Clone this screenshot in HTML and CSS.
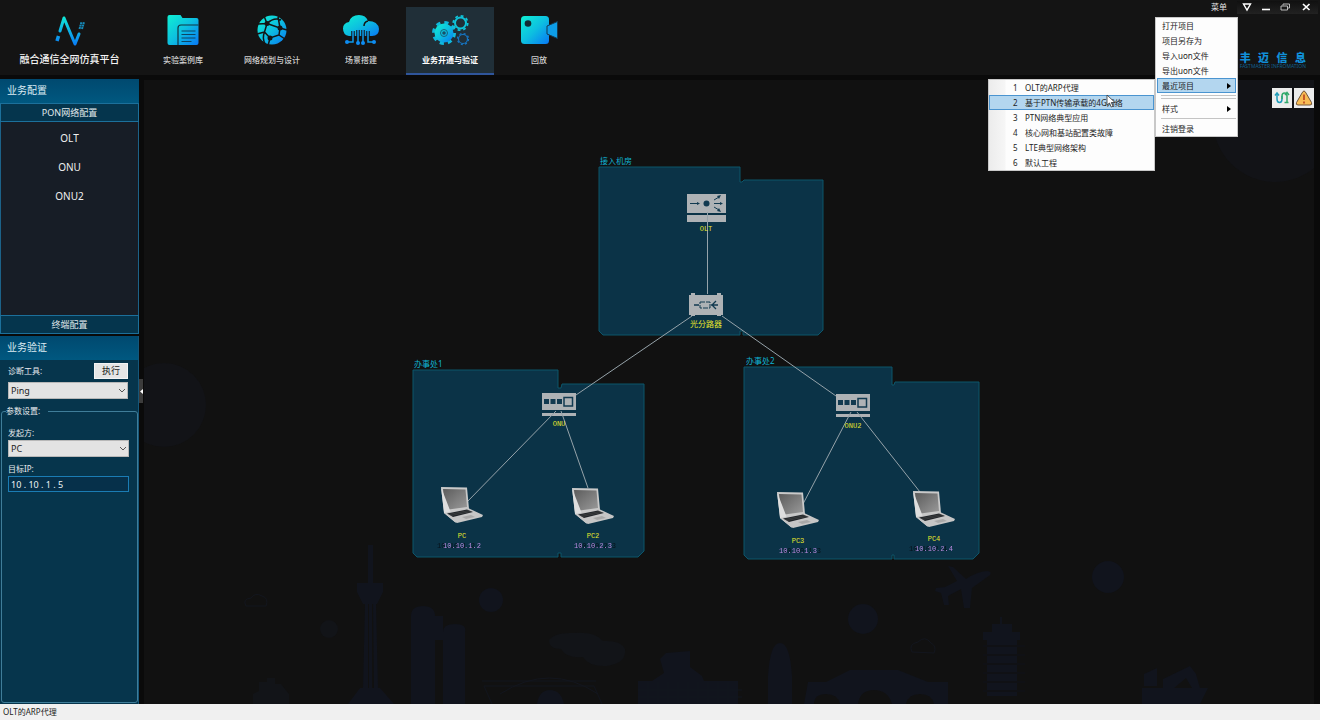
FILE: index.html
```
<!DOCTYPE html>
<html lang="zh-CN">
<head>
<meta charset="utf-8">
<title>融合通信全网仿真平台</title>
<link rel="stylesheet" href="styles.css">
</head>
<body>
<svg class="defs" width="0" height="0" aria-hidden="true">
  <defs>
    <linearGradient id="aqua" x1="0" y1="0" x2="1" y2="1">
      <stop offset="0" stop-color="#0ff0d2"/><stop offset="0.5" stop-color="#0dbfe0"/><stop offset="1" stop-color="#0878f5"/>
    </linearGradient>
    <linearGradient id="aquaDown" gradientUnits="userSpaceOnUse" x1="0" y1="0" x2="0" y2="32">
      <stop offset="0" stop-color="#10f0d4"/><stop offset="1" stop-color="#0a74f8"/>
    </linearGradient>
    <linearGradient id="screen" x1="0" y1="0" x2="1" y2="1">
      <stop offset="0" stop-color="#5c5c5c"/><stop offset="1" stop-color="#9b9b9b"/>
    </linearGradient>
    <symbol id="laptop" viewBox="0 0 44 38" overflow="visible">
      <path d="M1 1L27 1.500L29 23L16 27L4 26z" fill="#c9c9c9"/>
      <path d="M3 3L25.500 3.500L27 21L5 24z" fill="url(#screen)"/>
      <path d="M1 1L4 27L16 37L13 32z" fill="#dedede"/>
      <path d="M4 27L28 22L43 29L42 31L17 37L15 36z" fill="#c6c6c6"/>
      <path d="M7 27.500L27 23.500L33 26L13 31z" fill="#202428"/>
      <path d="M9 28.500L29 24.500M11 29.500L31 25.500" stroke="#555" stroke-width=".5"/>
      <path d="M22 31L31 29L35 31L26 33z" fill="#a8a8a8"/>
    </symbol>
    <symbol id="onu" viewBox="0 0 34 25" overflow="visible">
      <path d="M0 0H34V17H0zM0 20H34V23H0z" fill="#aeb2b5"/>
      <path d="M2 6h5v5h-5zM8.500 6h5v5h-5zM15 6h5v5h-5z" fill="#123a50"/>
      <rect x="22" y="4.500" width="8.500" height="8.500" fill="none" stroke="#123a50" stroke-width="1.500"/>
    </symbol>
  </defs>
</svg>

<div class="app">
  <header class="header">
    <div class="brand">
      <svg class="brand-mark" width="32" height="32" viewBox="0 0 32 32" aria-hidden="true">
        <g fill="none" stroke="url(#aquaDown)" stroke-width="3" stroke-linecap="round" stroke-linejoin="round">
          <path d="M6 16L10 3L21 29L25 19"/>
          <path d="M4.500 21L3 26" stroke-linecap="butt" stroke-width="3.500"/>
        </g>
        <path d="M25.500 14l2-7M28 14l2-7" stroke="#1689b8" stroke-width="2" stroke-dasharray="2 .5"/>
      </svg>
      <h1 class="brand-name">融合通信全网仿真平台</h1>
    </div>
    <nav class="nav" aria-label="主导航">
      <button class="nav-item" type="button">
        <svg width="36" height="36" viewBox="0 0 36 36" aria-hidden="true">
          <path d="M2.500 5q0-2 2-2h11l2 3h14q2 0 2 2v23q0 2-2 2h-27q-2 0-2-2z" fill="url(#aqua)"/>
          <path d="M13 33V16q0-3 3-3h17.500" fill="none" stroke="#123440" stroke-width="1.200"/>
          <path d="M16.500 19h14M16.500 22.500h14M16.500 26h14M16.500 29.500h10" stroke="#0c4564" stroke-width="1.200"/>
        </svg>
        <span>实验案例库</span>
      </button>
      <button class="nav-item" type="button">
        <svg width="36" height="36" viewBox="0 0 36 36" aria-hidden="true">
          <circle cx="18" cy="18" r="14.500" fill="url(#aqua)"/>
          <g stroke="#141414" stroke-width="1.500" fill="none">
            <path d="M13 11.500L26 16L25 23L16 26L10.500 20zM13 11.500L10 4M13 11.500L4 12M26 16L24 4.500M26 16L33 18M25 23L31 27M16 26L14 34M10.500 20L3 22M13 11.500Q20 5 27 8M10.500 20Q8 26 11 32"/>
          </g>
          <g fill="#141414"><circle cx="13" cy="11.500" r="2.500"/><circle cx="26" cy="16" r="2.500"/><circle cx="16" cy="26" r="2.500"/></g>
        </svg>
        <span>网络规划与设计</span>
      </button>
      <button class="nav-item" type="button">
        <svg width="40" height="36" viewBox="0 0 40 36" aria-hidden="true">
          <path d="M8 24Q2 23 2 16.500Q2 11 8 10Q10 3 18 3Q25 3 27 9Q37 9 38 17Q38 24 31 24z" fill="url(#aqua)"/>
          <path d="M27 9Q23 10 23 14" fill="none" stroke="#141414" stroke-width="1.500"/>
          <g fill="none" stroke="#141414" stroke-width="3.500"><path d="M12 19V29M17 18V29M22 18V29M27 19V29"/></g>
          <g fill="none" stroke="#0d9bea" stroke-width="1.500"><path d="M12 19V30H7M17 18V31M22 18V31M27 19v11h6"/></g>
          <g fill="#0d8cf2"><circle cx="6" cy="30" r="2"/><circle cx="17" cy="31" r="2"/><circle cx="22" cy="31" r="2"/><circle cx="33" cy="30" r="2"/></g>
        </svg>
        <span>场景搭建</span>
      </button>
      <button class="nav-item nav-item--active" type="button" aria-current="page">
        <svg width="40" height="36" viewBox="0 0 40 36" aria-hidden="true">
          <circle cx="14" cy="21" r="10.500" fill="none" stroke="#10b9dc" stroke-width="3" stroke-dasharray="4.200 4.050"/>
          <circle cx="14" cy="21" r="9.500" fill="url(#aqua)"/>
          <circle cx="14" cy="21" r="3.500" fill="none" stroke="#17627c" stroke-width="1"/>
          <circle cx="14" cy="21" r="1.800" fill="#17516a"/>
          <circle cx="30.500" cy="11" r="5.500" fill="none" stroke="#0fc2d8" stroke-width="2"/>
          <circle cx="30.500" cy="11" r="7.200" fill="none" stroke="#0fc2d8" stroke-width="1.800" stroke-dasharray="2.850 2.800"/>
          <circle cx="33" cy="27" r="4.500" fill="none" stroke="#1677c5" stroke-width="1.200"/>
          <circle cx="33" cy="27" r="5.500" fill="none" stroke="#1677c5" stroke-width="1.300" stroke-dasharray="2 2.320"/>
        </svg>
        <span>业务开通与验证</span>
      </button>
      <button class="nav-item" type="button">
        <svg width="40" height="36" viewBox="0 0 40 36" aria-hidden="true">
          <rect x="2" y="4" width="28" height="28" rx="3.500" fill="url(#aqua)"/>
          <circle cx="9" cy="11.500" r="3.300" fill="#122a32"/>
          <path d="M28 14L38.500 9.500V26.500L28 22z" fill="#0d9ee8" stroke="#143a50" stroke-width="1"/>
        </svg>
        <span>回放</span>
      </button>
    </nav>
    <div class="header-end">
      <div class="window-bar">
        <button class="menu-trigger" type="button" aria-expanded="true">菜单</button>
        <button class="win-btn" type="button" aria-label="展开"><svg width="10" height="10" viewBox="0 0 10 10"><path d="M1.500 2h7L5 8z" fill="none" stroke="#fff" stroke-width="1.400"/></svg></button>
        <button class="win-btn" type="button" aria-label="最小化"><svg width="10" height="10" viewBox="0 0 10 10"><path d="M1 7.500h8" stroke="#fff" stroke-width="1.600"/></svg></button>
        <button class="win-btn" type="button" aria-label="还原"><svg width="10" height="10" viewBox="0 0 10 10"><path d="M3 3.500V2h6.500v4H7.500M1 4h6.500v4H1z" fill="none" stroke="#bbb"/></svg></button>
        <button class="win-btn win-btn--close" type="button" aria-label="关闭"><svg width="10" height="10" viewBox="0 0 10 10"><path d="M2 2l6.500 6M8.500 2L2 8" stroke="#fff" stroke-width="1.700"/></svg></button>
      </div>
      <div class="vendor">
        <p class="vendor-name"><span>丰</span><span>迈</span><span>信</span><span>息</span></p>
        <p class="vendor-sub">FASTMASTER INFROMATION</p>
      </div>
      <div class="menu" role="menu">
        <button class="menu-item" role="menuitem" type="button">打开项目</button>
        <button class="menu-item" role="menuitem" type="button">项目另存为</button>
        <button class="menu-item" role="menuitem" type="button">导入uon文件</button>
        <button class="menu-item" role="menuitem" type="button">导出uon文件</button>
        <div class="menu-group">
          <button class="menu-item menu-item--on" role="menuitem" type="button" aria-expanded="true">最近项目<svg width="4" height="6" viewBox="0 0 4 6"><path d="M0 0l4 3-4 3z"/></svg></button>
          <div class="submenu" role="menu">
            <button class="recent" role="menuitem" type="button"><span>1</span>OLT的ARP代理</button>
            <button class="recent recent--on" role="menuitem" type="button"><span>2</span>基于PTN传输承载的4G网络</button>
            <button class="recent" role="menuitem" type="button"><span>3</span>PTN网络典型应用</button>
            <button class="recent" role="menuitem" type="button"><span>4</span>核心网和基站配置类故障</button>
            <button class="recent" role="menuitem" type="button"><span>5</span>LTE典型网络架构</button>
            <button class="recent" role="menuitem" type="button"><span>6</span>默认工程</button>
            <svg class="cursor" width="10" height="14" viewBox="0 0 10 14" aria-hidden="true"><path d="M1 1v10l2.500-2 1.700 4 1.800-.8-1.700-3.700H9z" fill="#fff" stroke="#333" stroke-width=".8"/></svg>
          </div>
        </div>
        <hr class="menu-sep">
        <hr class="menu-sep">
        <button class="menu-item" role="menuitem" type="button">样式<svg width="4" height="6" viewBox="0 0 4 6"><path d="M0 0l4 3-4 3z"/></svg></button>
        <hr class="menu-sep">
        <button class="menu-item" role="menuitem" type="button">注销登录</button>
      </div>
    </div>
  </header>

  <div class="body">
    <aside class="sidebar">
      <section class="config">
        <h2 class="panel-title">业务配置</h2>
        <button class="accordion" type="button">PON网络配置</button>
        <div class="devices">
          <button class="device" type="button">OLT</button>
          <button class="device" type="button">ONU</button>
          <button class="device" type="button">ONU2</button>
        </div>
        <button class="accordion" type="button">终端配置</button>
      </section>
      <form class="verify">
        <h2 class="panel-title">业务验证</h2>
        <div class="tool">
          <div class="tool-row">
            <label for="tool">诊断工具:</label>
            <button class="run" type="button">执行</button>
          </div>
          <div class="combo">
            <select id="tool"><option>Ping</option></select>
            <svg width="8" height="6" viewBox="0 0 8 6" aria-hidden="true"><path d="M1 1l3 3 3-3" fill="none" stroke="#555"/></svg>
          </div>
        </div>
        <fieldset class="params">
          <legend>参数设置:</legend>
          <label for="source">发起方:</label>
          <div class="combo">
            <select id="source"><option>PC</option></select>
            <svg width="8" height="6" viewBox="0 0 8 6" aria-hidden="true"><path d="M1 1l3 3 3-3" fill="none" stroke="#555"/></svg>
          </div>
          <label for="target">目标IP:</label>
          <input class="ip" id="target" type="text" value="10 . 10 . 1 . 5">
        </fieldset>
      </form>
    </aside>
    <div class="gutter">
      <button class="collapse" type="button" aria-label="收起侧栏"><svg width="3" height="5" viewBox="0 0 3 5"><path d="M3 0v5L0 2.500z" fill="#fff"/></svg></button>
    </div>
    <main class="stage">
      <svg class="topology" viewBox="144 80 1170 624" preserveAspectRatio="xMinYMin meet" role="img" aria-label="网络拓扑">
        <g class="skyline">
          <circle cx="164" cy="405" r="42" class="haze"/>
          <circle cx="1275" cy="120" r="62" class="haze"/>
          <path d="M368 545h5v38h10v9l-6 12h-14l-6-12v-9h11zM365 604h3v84h-5zM369 604h3v84h-3zM373 604h3l2 84h-4zM360 688h20l14 16h-46z"/>
          <path d="M411 704V616q0-10 12-10t12 10v88zM443 704V632q0-8 12-8t10 8v72zM435 616h8v24h-8z"/>
          <circle cx="491" cy="600" r="12"/><circle cx="329" cy="629" r="9" class="faint"/>
          <circle cx="863" cy="619" r="15"/><circle cx="1108" cy="577" r="16"/>
          <path class="outline" d="M246 606q-4-7 5-8q4-6 11-2q7 2 4 10zM912 652q-4-8 6-10q7-7 13 1q6 3 3 10z"/>
          <path class="faint" d="M549 640q6-8 24-7q22-2 30 8q18-1 22 8q2 14-18 17q-18 1-24-9q-16 2-22-8q-12 0-12-9z"/>
          <path class="faint" d="M253 704v-10l6-3v-9h8v-4h8v6h6l8 10v10z"/>
          <path class="outline" d="M482 681h114M484 686h110M492 704l-8-18M602 704l-8-18M500 694q50-32 98 0"/>
          <path d="M537 704q2-14 13-14t14 14zM638 704v-23h14l12-8-4-14 6-6 24-2v16l12 9 2 5h34v23z"/>
          <path d="M768 704v-28q2-33 12-33t12 33v28z"/>
          <path d="M808 682h18l24-12h48l30 12h20v22h-14q-2-10-14-10t-14 10h-14q-4-14-18-14t-16 14h-18q-2-10-14-10t-12 10h-10z"/>
          <path d="M948 566l5 1 13 12q12-8 22-8q4 1 2 4l-18 13-2 20h-6l-3-19-13 7 1 9h-5l-3-12-6-2 1-3 9-1 12-6z"/>
          <path d="M1000 617h2v7h10v8h8v8h-3v56h-30v-56h-4v-8h9v-8h8z"/>
          <g class="floors"><path d="M983 646h42M983 655h42M983 664h42M983 673h42M983 682h42M983 691h42"/></g>
          <path d="M1087 704v-16h66l-8 16zM1089 686v-12l13-6v18zM1108 688v-9l27-13 6 8 4 14h-8l-6-10-12 10z" transform="translate(55 0)"/>
          <path class="outline" d="M638 690h104M638 697h104M648 682v22M658 682v22M668 682v22M678 682v22M688 682v22M698 682v22M708 682v22M718 682v22M728 682v22"/>
        </g>

        <g class="rooms">
          <path d="M599 167H740V182H742L744 180H823V330L818 335H743V331H740V335H603L599 331z"/>
          <path d="M413 370H558V388H561L562 384H644V551L638 557H561V553H558V557H417L413 553z"/>
          <path d="M744 367H892V385H894L895 382H979V553L973 559H894V555H892V559H748L744 555z"/>
        </g>
        <g class="room-names">
          <text x="600" y="164">接入机房</text>
          <text x="414" y="367">办事处1</text>
          <text x="746" y="364">办事处2</text>
        </g>

        <g>
          <path d="M687 194H726V213H687zM687 215H726V222H687z" fill="#aeb2b5"/>
          <path d="M690 203.500h9M714 203.500h7M714 200l5-3M714 207l5 3" stroke="#123a50"/>
          <path d="M697 202v3l3-1.500zM720 202v3l3-1.500zM717 196l4-1-2 4zM717 211l4 1-2-4z" fill="#123a50"/>
          <circle cx="706.500" cy="203.500" r="3" fill="#123a50"/>
        </g>
        <g>
          <path d="M689 295h2v-2h4v2h22v-2h4v2h2v20h-2v1h-4v-1h-22v1h-4v-1h-2z" fill="#aeb2b5"/>
          <path d="M694 305h5M711 305h7M716 301l-4 4 4 4" stroke="#123a50" stroke-width="1.300" fill="none"/>
          <path d="M700 302h10v6h-10z" stroke="#123a50" fill="none" stroke-dasharray="5 1"/>
        </g>
        <use href="#onu" x="542" y="393" width="34" height="25"/>
        <use href="#onu" x="836" y="394" width="34" height="25"/>
        <g class="links">
          <path d="M707.500 212V294M692 316L576 395M722 316L836 396M556 411L467 502M561 411L588 488M851 412L803 504M857 412L920 492"/>
        </g>
        <use href="#laptop" x="440" y="486" width="44" height="38"/>
        <use href="#laptop" x="571" y="487" width="44" height="38"/>
        <use href="#laptop" x="776" y="491" width="44" height="38"/>
        <use href="#laptop" x="912" y="490" width="44" height="38"/>

        <g class="node-names">
          <text x="706" y="231">OLT</text>
          <text x="706" y="327" class="cjk">光分路器</text>
          <text x="559" y="426">ONU</text>
          <text x="853" y="428">ONU2</text>
          <text x="462" y="538">PC</text>
          <text x="593" y="538">PC2</text>
          <text x="798" y="543">PC3</text>
          <text x="934" y="541">PC4</text>
        </g>
        <g class="ip-names">
          <text class="shade-left" x="462" y="548">10.10.1.2</text>
          <text class="shade-right" x="593" y="548">10.10.2.3</text>
          <text class="shade-right" x="798" y="553">10.10.1.3</text>
          <text class="shade-left" x="934" y="551">10.10.2.4</text>
        </g>
      </svg>
      <div class="stage-tools">
        <button class="tool-btn" type="button" aria-label="链路"><svg width="16" height="16" viewBox="0 0 16 16" fill="none" stroke-width="1.500"><path d="M3 3v6q0 3.500 2.500 3.500T8 9V6" stroke="#1d9bb8"/><path d="M1 5.500L3 3l2 2.500" stroke="#1d9bb8"/><path d="M8 9V6q0-3 2.500-3T13 6v6" stroke="#30a86a"/><path d="M11 5L13 2.500L15 5M10.500 12.500h4" stroke="#30a86a"/></svg></button>
        <button class="tool-btn" type="button" aria-label="告警"><svg width="18" height="18" viewBox="0 0 18 18"><path d="M9 2q1 0 2 2l5.500 9.500q1 2.500-1.500 2.500H3q-2.500 0-1.500-2.500L7 4q1-2 2-2z" fill="#f7bb54" stroke="#70553a"/><path d="M9 5.500v5.500M9 12.500v2" stroke="#c65a28" stroke-width="2"/></svg></button>
      </div>
    </main>
  </div>

  <footer class="status">OLT的ARP代理</footer>
</div>
</body>
</html>
```
FILE: styles.css
```
* { box-sizing: border-box; }
body {
  margin: 0;
  background: #0a0a0a;
  color: #e6eaec;
  font: 8px/12px "Noto Sans", "Noto Sans CJK SC", sans-serif;
}
h1, h2, p { margin: 0; }
button, select, input { font: inherit; color: inherit; border: 0; margin: 0; padding: 0; background: none; border-radius: 0; }
.defs { position: absolute; }
.app { display: flex; flex-direction: column; min-height: 100vh; }

/* header */
.header { display: flex; background: #141414; height: 75px; }
.brand { width: 139px; display: flex; flex-direction: column; align-items: center; padding-top: 15px; gap: 4px; }
.brand-name { font-size: 10px; line-height: 16px; font-weight: 500; color: #f4f4f4; white-space: nowrap; }
.nav { display: flex; gap: 1px; padding-top: 7px; flex: 1; }
.nav-item { width: 88px; display: flex; flex-direction: column; align-items: center; padding-top: 5px; gap: 6px; color: #d0d0d0; font-weight: 500; border-bottom: 2px solid transparent; }
.nav-item svg { display: block; }
.nav-item--active { background: #202f38; color: #fff; font-weight: 700; border-bottom-color: #2f559b; }
.header-end { position: relative; display: flex; flex-direction: column; align-items: flex-end; }
.window-bar { display: flex; align-items: center; height: 14px; padding-right: 2px; }
.menu-trigger { width: 36px; color: #e0e0e0; }
.win-btn { width: 19px; height: 13px; display: grid; place-items: center; background: linear-gradient(#101010, #222); }
.win-btn--close { width: 24px; }
.vendor { margin-top: 37px; padding-right: 14px; color: #118fd8; }
.vendor-name { display: flex; justify-content: space-between; font-size: 11px; line-height: 13px; font-weight: 900; }
.vendor-sub { font-size: 5px; line-height: 5px; color: #12608f; }

/* menus */
.menu { position: absolute; z-index: 2; top: 17px; right: 82px; width: 83px; padding: 0 1px; background: #fdfdfd; border: 1px solid #c8c8c8; color: #1c1c1c; }
.menu-group { position: relative; }
.menu-item { display: flex; align-items: center; justify-content: space-between; width: 100%; height: 15px; line-height: 13px; padding: 0 4px; white-space: nowrap; text-align: left; border: 1px solid transparent; }
.menu-item--on { background: #b3d6ef; border-color: #4a94d0; }
.menu-sep { height: 1px; margin: 2px 0 2px 4px; border: 0; background: #c4c4c4; }
.submenu { position: absolute; top: 1px; right: calc(100% + 2px); width: 167px; border: 1px solid #c8c8c8; background: linear-gradient(90deg, #ececec 0, #f6f6f6 16px, #fdfdfd 17px); }
.recent { display: flex; align-items: center; width: 100%; height: 15px; line-height: 13px; border: 1px solid transparent; white-space: nowrap; }
.recent span { width: 15px; margin-left: 20px; text-align: left; padding-left: 3px; }
.recent--on { background: #b3d6ef; border-color: #4a94d0; }
.cursor { position: absolute; left: 117px; top: 14px; }

/* body */
.body { flex: 1; display: flex; padding-top: 4px; }
.sidebar { width: 139px; display: flex; flex-direction: column; gap: 2px; }
.panel-title { font-size: 10px; line-height: 22px; padding-bottom: 2px; font-weight: 400; padding-left: 7px; color: #dcebf2; background: linear-gradient(#00496f, #005880); }
.config { display: flex; flex-direction: column; height: 255px; }
.accordion { height: 19px; border: 1px solid #1c709b; background: #05354d; color: #e0e8ec; font-size: 9px; line-height: 16px; }
.devices { flex: 1; display: flex; flex-direction: column; gap: 9px; padding-top: 6px; background: #171d26; border: solid #1c6288; border-width: 0 1px; }
.device { height: 20px; font-size: 10px; color: #f0f0f0; }
.verify { flex: 1; display: flex; flex-direction: column; background: #06354c; border-right: 1px solid #15577a; }
.tool { padding: 3px 10px 0 8px; display: flex; flex-direction: column; gap: 3px; }
.tool-row { display: flex; justify-content: space-between; align-items: center; }
.run { width: 34px; height: 16px; background: #e5e5e5; color: #222; border: 1px solid #f4f4f4; font-size: 9px; line-height: 12px; }
.combo { display: grid; align-items: center; background: #e3e3e3; border: 1px solid #b8b8b8; height: 17px; }
.combo > * { grid-area: 1 / 1; }
.combo select { appearance: none; width: 100%; height: 15px; padding-left: 2px; color: #222; font-size: 9px; }
.combo svg { justify-self: end; margin-right: 1px; pointer-events: none; }
.params { flex: 1; min-width: 0; margin: 6px 0 1px 1px; padding: 10px 8px 0 6px; border: 1px solid #3f7d99; border-radius: 3px; display: flex; flex-direction: column; }
.params legend { margin-left: -2px; padding: 0 8px 0 0; line-height: 12px; }
.params .combo { margin: 1px 0 6px; }
.ip { width: 100%; height: 16px; margin-top: 1px; padding: 0 2px; border: 1px solid #1a7cb4; background: #06304a; color: #eef4f6; font-size: 9px; }
.gutter { width: 5px; display: flex; align-items: flex-start; padding-top: 300px; }
.collapse { width: 4px; height: 24px; background: #3c3c3c; display: grid; place-items: center; }

/* topology canvas */
.stage { position: relative; flex: 1; margin: 1px 6px 0 0; background: #111; }
.topology { display: block; width: 100%; }
.skyline { fill: #11141d; }
.skyline .haze { fill: #121317; }
.skyline .faint { fill: #121418; }
.skyline .outline { fill: none; stroke: #13161e; stroke-width: 1; }
.skyline .floors { stroke: #101115; stroke-width: 2; }
.rooms { fill: #0b3347; stroke: #0c566b; stroke-width: 1; }
.links { fill: none; stroke: #96a3aa; stroke-width: 1; }
.room-names { fill: #0fb4d4; font-size: 8px; }
.node-names { fill: #e8e82c; font: 7px "Liberation Mono", "Noto Sans CJK SC", monospace; text-anchor: middle; }
.node-names .cjk { font-size: 8px; }
.ip-names { fill: #b98be0; font: 7px "Liberation Mono", monospace; text-anchor: middle; }
.shade-left { filter: drop-shadow(-6px 0 0 #06131c); }
.shade-right { filter: drop-shadow(4px 0 0 #06131c); }
.stage-tools { position: absolute; top: 8px; right: 0; display: flex; gap: 2px; }
.tool-btn { width: 20px; height: 20px; background: #ececec; display: grid; place-items: center; }

.status { height: 16px; padding-left: 3px; line-height: 15px; background: #f0f0f0; color: #222; }
```
